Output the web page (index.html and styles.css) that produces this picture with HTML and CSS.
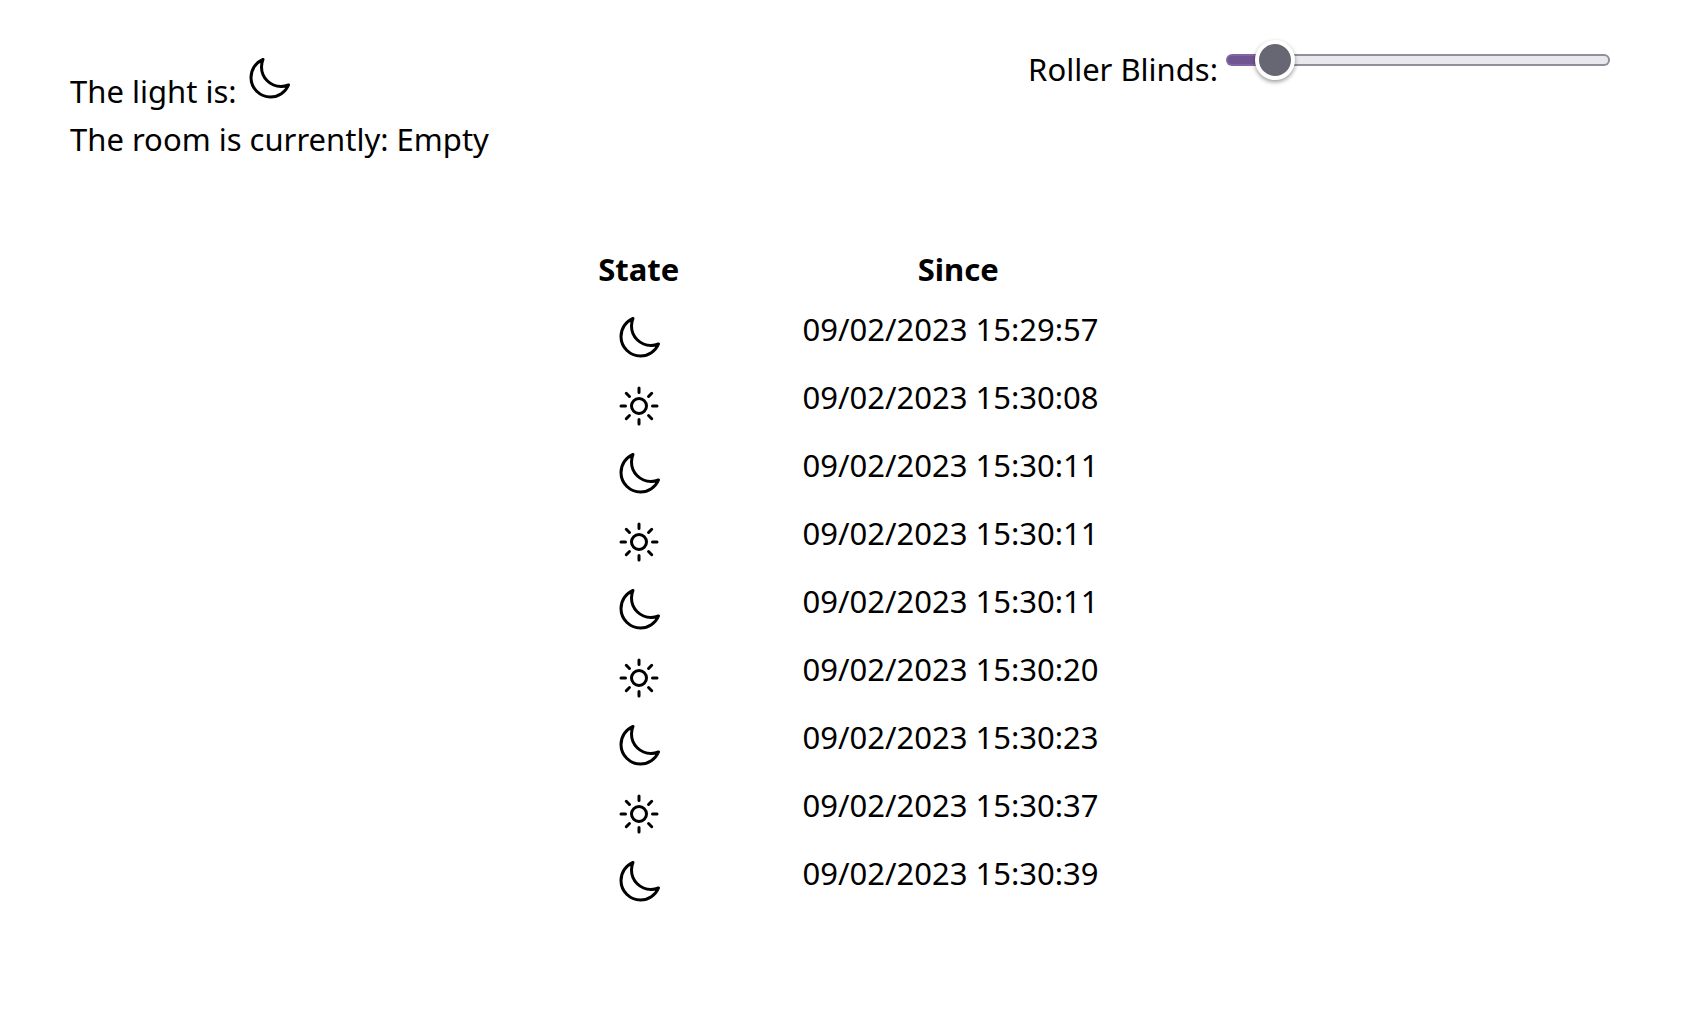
FILE: index.html
```html
<!DOCTYPE html>
<html lang="en">
<head>
<meta charset="utf-8">
<title>Room</title>
<link rel="stylesheet" href="styles.css">
</head>
<body>
<svg class="sprite" aria-hidden="true">
  <symbol id="moon" viewBox="0 0 24 24"><path d="M21.752 15.002A9.718 9.718 0 0118 15.75c-5.385 0-9.75-4.365-9.75-9.75 0-1.33.266-2.597.748-3.752A9.753 9.753 0 003 11.25C3 16.635 7.365 21 12.75 21a9.753 9.753 0 009.002-5.998z"/></symbol>
  <symbol id="sun" viewBox="0 0 24 24"><path d="M12 3v2.25m6.364.386l-1.591 1.591M21 12h-2.25m-.386 6.364l-1.591-1.591M12 18.75V21m-4.773-4.227l-1.591 1.591M5.25 12H3m4.227-4.773L5.636 5.636M15.75 12a3.75 3.75 0 11-7.5 0 3.75 3.75 0 017.5 0z"/></symbol>
</svg>
<header class="top">
  <div class="status">
    <div>The light is: <svg class="icon" role="img" aria-label="off"><use href="#moon"/></svg></div>
    <div>The room is currently: Empty</div>
  </div>
  <div class="blinds">
    <label for="blinds">Roller Blinds:</label>
    <input class="slider" id="blinds" type="range" min="0" max="100" value="8">
  </div>
</header>
<main class="history">
  <table class="log">
    <thead><tr><th>State</th><th>Since</th></tr></thead>
    <tbody>
      <tr><td class="state"><svg class="icon"><use href="#moon"/></svg></td><td>09/02/2023 15:29:57</td></tr>
      <tr><td class="state"><svg class="icon"><use href="#sun"/></svg></td><td>09/02/2023 15:30:08</td></tr>
      <tr><td class="state"><svg class="icon"><use href="#moon"/></svg></td><td>09/02/2023 15:30:11</td></tr>
      <tr><td class="state"><svg class="icon"><use href="#sun"/></svg></td><td>09/02/2023 15:30:11</td></tr>
      <tr><td class="state"><svg class="icon"><use href="#moon"/></svg></td><td>09/02/2023 15:30:11</td></tr>
      <tr><td class="state"><svg class="icon"><use href="#sun"/></svg></td><td>09/02/2023 15:30:20</td></tr>
      <tr><td class="state"><svg class="icon"><use href="#moon"/></svg></td><td>09/02/2023 15:30:23</td></tr>
      <tr><td class="state"><svg class="icon"><use href="#sun"/></svg></td><td>09/02/2023 15:30:37</td></tr>
      <tr><td class="state"><svg class="icon"><use href="#moon"/></svg></td><td>09/02/2023 15:30:39</td></tr>
    </tbody>
  </table>
</main>
</body>
</html>
```
FILE: styles.css
```css
* { box-sizing: border-box; }

body {
  margin: 0;
  background: #fff;
  color: #000;
  font: 31px/48px "Noto Sans", sans-serif;
}

.sprite { display: none; }

.icon {
  width: 48px;
  height: 48px;
  fill: none;
  stroke: currentColor;
  stroke-width: 1.5;
  stroke-linecap: round;
  stroke-linejoin: round;
  vertical-align: baseline;
}

.top {
  display: flex;
  justify-content: space-between;
  align-items: flex-start;
  padding: 45px 85px 0 70px;
}

.status { padding-top: 10px; }

.blinds {
  display: flex;
  align-items: flex-start;
  gap: 8px;
}

.slider {
  appearance: none;
  width: 384px;
  height: 12px;
  margin: 9px 0;
  border: 2px solid transparent;
  border-radius: 6px;
  background:
    linear-gradient(#6f5691, #6f5691) 0 0 / 48px 100% no-repeat padding-box,
    linear-gradient(#8066a3, #8066a3) 0 0 / 48px 100% no-repeat border-box,
    linear-gradient(#e9e9ed, #e9e9ed) padding-box,
    linear-gradient(#8f8f9d, #8f8f9d) border-box;
}

.slider::-webkit-slider-thumb {
  appearance: none;
  width: 40px;
  height: 40px;
  border: 4px solid #fff;
  border-radius: 50%;
  background: #676774;
  box-shadow: 0 2px 4px rgba(0, 0, 0, 0.4);
}

.history { padding: 82px 98px 96px 0; }

.log {
  width: 40%;
  margin: 0 auto;
  table-layout: fixed;
  border-collapse: collapse;
}

.log th { padding: 0 0 12px; }

.log td {
  height: 68px;
  padding: 0 0 0 4px;
  vertical-align: top;
}

.log .state {
  padding: 9px 0 0;
  text-align: center;
}

.state .icon { display: block; margin: 0 auto; }
```
